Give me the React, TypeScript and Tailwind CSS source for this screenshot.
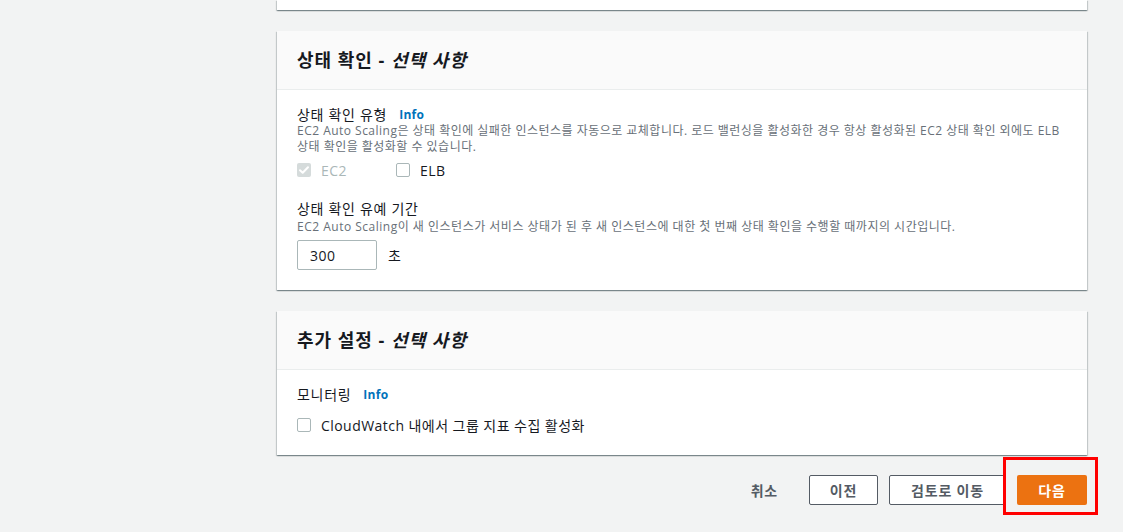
import React from "react";

const cardShadow =
  "bg-white shadow-[0_1px_1px_0_rgba(0,28,36,0.3),1px_1px_1px_0_rgba(0,28,36,0.15),-1px_1px_1px_0_rgba(0,28,36,0.15)]";

function Info() {
  return (
    <span className="ml-3 text-[12px] font-bold leading-4 tracking-[0.3px] text-[#0073bb]">
      Info
    </span>
  );
}

function Checkbox({
  checked,
  disabled,
}: {
  checked?: boolean;
  disabled?: boolean;
}) {
  if (checked && disabled) {
    return (
      <span className="flex h-[14px] w-[14px] shrink-0 items-center justify-center rounded-[2px] bg-[#d5dbdb]">
        <svg viewBox="0 0 14 14" className="h-[14px] w-[14px]" fill="none">
          <path
            d="M3 7.2l2.7 2.6L11 4.2"
            stroke="#ffffff"
            strokeWidth={2}
            strokeLinecap="round"
            strokeLinejoin="round"
          />
        </svg>
      </span>
    );
  }
  return (
    <span className="block h-[14px] w-[14px] shrink-0 rounded-[2px] border border-[#aab7b8] bg-white" />
  );
}

function CardHeader({ title }: { title: string }) {
  return (
    <div className="flex h-[59px] items-center border-b border-[#eaeded] bg-[#fafafa] px-5">
      <h2 className="text-[18px] font-bold leading-[22px] tracking-[1px] text-[#16191f]">
        {title} - <i>선택 사항</i>
      </h2>
    </div>
  );
}

export default function App() {
  return (
    <div
      className="min-h-[532px] w-[1123px] bg-[#f2f3f3] text-[#16191f]"
      style={{ fontFamily: '"Open Sans", "Noto Sans CJK KR", sans-serif' }}
    >
      <div className="ml-[277px] flex w-[810px] flex-col">
        <div className={`h-[10px] ${cardShadow}`} />

        <section className={`mt-[21px] ${cardShadow}`}>
          <CardHeader title="상태 확인" />
          <div className="px-5 pb-5 pt-[17px]">
            <div className="flex items-center text-[14px] leading-4 tracking-[0.7px]">
              상태 확인 유형
              <Info />
            </div>
            <p className="text-[12px] leading-4 tracking-[0.48px] text-[#687078]">
              <span className="whitespace-nowrap">
                EC2 Auto Scaling은 상태 확인에 실패한 인스턴스를 자동으로 교체합니다. 로드 밸런싱을 활성화한 경우 항상 활성화된 EC2 상태 확인 외에도 ELB
              </span>
              <br />
              상태 확인을 활성화할 수 있습니다.
            </p>
            <div className="mt-[5px] flex h-5 items-center">
              <label className="flex w-[99px] items-center gap-[10px] text-[14px] tracking-[0.5px] text-[#aab7b8]">
                <Checkbox checked disabled />
                EC2
              </label>
              <label className="flex items-center gap-[10px] text-[14px] tracking-[0.5px]">
                <Checkbox />
                ELB
              </label>
            </div>

            <div className="mt-[21px] text-[14px] leading-4 tracking-[0.7px]">상태 확인 유예 기간</div>
            <p className="mt-[2px] text-[12px] leading-4 tracking-[0.5px] text-[#687078]">
              EC2 Auto Scaling이 새 인스턴스가 서비스 상태가 된 후 새 인스턴스에 대한 첫 번째 상태 확인을 수행할 때까지의 시간입니다.
            </p>
            <div className="mt-[5px] flex items-center">
              <div className="flex h-[30px] w-[80px] items-center rounded-[2px] border border-[#aab7b8] px-3 text-[14px] tracking-[0.5px]">
                300
              </div>
              <span className="ml-[11px] text-[14px]">초</span>
            </div>
          </div>
        </section>

        <section className={`mt-[21px] ${cardShadow}`}>
          <CardHeader title="추가 설정" />
          <div className="px-5 pb-5 pt-[17px]">
            <div className="flex items-center text-[14px] leading-4 tracking-[0.7px]">
              모니터링
              <Info />
            </div>
            <label className="mt-3 flex h-5 items-center gap-[10px] text-[14px] tracking-[0.45px]">
              <Checkbox />
              CloudWatch 내에서 그룹 지표 수집 활성화
            </label>
          </div>
        </section>

        <div className="mt-5 flex items-center justify-end gap-[11px] tracking-[0.8px]">
          <button className="h-[30px] px-5 text-[14px] font-bold text-[#545b64]">
            취소
          </button>
          <button className="h-[30px] w-[69px] rounded-[2px] border border-[#545b64] bg-white text-[14px] font-bold text-[#545b64]">
            이전
          </button>
          <button className="h-[30px] w-[117px] rounded-[2px] border border-[#545b64] bg-white text-[14px] font-bold text-[#545b64]">
            검토로 이동
          </button>
          <div className="relative">
            <button className="h-[30px] w-[70px] rounded-[2px] bg-[#ec7211] text-[14px] font-bold text-white">
              다음
            </button>
            <div className="pointer-events-none absolute -left-[14px] -right-[11px] -top-[18px] -bottom-[10px] border-[3px] border-[#ff0000]" />
          </div>
        </div>
      </div>
    </div>
  );
}
